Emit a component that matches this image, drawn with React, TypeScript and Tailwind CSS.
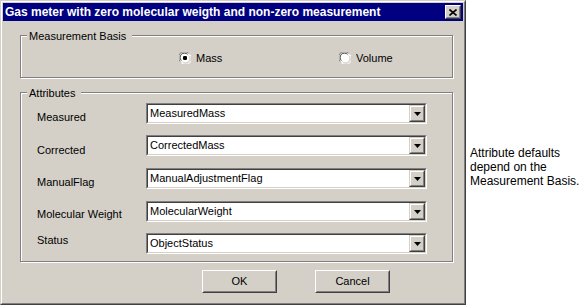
import React from "react";

const rows = [
  { label: "Measured", value: "MeasuredMass", pad: "pt-[8px]" },
  { label: "Corrected", value: "CorrectedMass", pad: "pt-[9px]" },
  { label: "ManualFlag", value: "ManualAdjustmentFlag", pad: "pt-[8px]" },
  { label: "Molecular Weight", value: "MolecularWeight", pad: "pt-[7px]" },
  { label: "Status", value: "ObjectStatus", pad: "pt-[1px]" },
];

function Radio({ checked }: { checked: boolean }) {
  return (
    <svg width="12" height="12" viewBox="0 0 12 12" className="shrink-0">
      <circle cx="6" cy="6" r="5.5" fill="#ffffff" />
      <path d="M1.2 9.5 A5.5 5.5 0 0 1 9.5 1.2" stroke="#808080" strokeWidth="1" fill="none" />
      <path d="M2.4 8.6 A4.3 4.3 0 0 1 8.6 2.4" stroke="#404040" strokeWidth="1" fill="none" />
      <path d="M10.8 2.5 A5.5 5.5 0 0 1 2.5 10.8" stroke="#ffffff" strokeWidth="1" fill="none" />
      <path d="M9.6 3.4 A4.3 4.3 0 0 1 3.4 9.6" stroke="#d4d0c8" strokeWidth="1" fill="none" />
      {checked && <rect x="4" y="4" width="4" height="4" rx="1.2" fill="#000000" />}
    </svg>
  );
}

function Group({ title, children, className }: { title: string; children: React.ReactNode; className: string }) {
  return (
    <div className={`relative ml-[17px] w-[433px] border border-[#808080] shadow-[inset_1px_1px_0_#ffffff,1px_1px_0_#ffffff] ${className}`}>
      <span className="absolute -top-[6px] left-[6px] bg-[#d4d0c8] pl-[2px] pr-[6px] text-[11px] leading-[13px] text-black">
        {title}
      </span>
      {children}
    </div>
  );
}

function Combo({ value }: { value: string }) {
  return (
    <div className="w-[281px] h-[21px] border border-t-[#808080] border-l-[#808080] border-r-white border-b-white">
      <div className="h-full flex border border-t-[#404040] border-l-[#404040] border-r-[#d4d0c8] border-b-[#d4d0c8] bg-white">
        <div className="flex-1 pl-[2px] pt-[1px] text-[11px] leading-[15px] text-black">{value}</div>
        <div className="w-[16px] h-[17px] border border-t-[#d4d0c8] border-l-[#d4d0c8] border-r-[#404040] border-b-[#404040] bg-[#d4d0c8]">
          <div className="h-full flex items-center justify-center border border-t-white border-l-white border-r-[#808080] border-b-[#808080]">
            <svg width="7" height="4" viewBox="0 0 7 4">
              <path d="M0 0 H7 L3.5 4 Z" fill="#000000" />
            </svg>
          </div>
        </div>
      </div>
    </div>
  );
}

function Button({ text }: { text: string }) {
  return (
    <div className="w-[75px] h-[23px] border border-t-white border-l-white border-r-[#404040] border-b-[#404040]">
      <div className="h-full flex items-center justify-center border border-t-[#d4d0c8] border-l-[#d4d0c8] border-r-[#808080] border-b-[#808080] text-[11px] text-black">
        {text}
      </div>
    </div>
  );
}

export default function App() {
  return (
    <div className="flex w-[580px] h-[306px] bg-white font-['Liberation_Sans',Arial,sans-serif]">
      <div className="w-[466px] h-[305px] shrink-0 border border-t-[#d4d0c8] border-l-[#d4d0c8] border-r-[#404040] border-b-[#404040] bg-[#d4d0c8]">
        <div className="h-full p-[1px] border border-t-white border-l-white border-r-[#808080] border-b-[#808080]">
          <div className="h-[18px] flex items-center justify-between bg-[#000080] pl-[2px] pr-[2px]">
            <span className="text-[12px] font-bold leading-[18px] text-white">
              Gas meter with zero molecular weigth and non-zero measurement
            </span>
            <div className="w-[16px] h-[14px] border border-t-white border-l-white border-r-[#404040] border-b-[#404040] bg-[#d4d0c8]">
              <div className="h-full flex items-center justify-center border border-t-[#d4d0c8] border-l-[#d4d0c8] border-r-[#808080] border-b-[#808080]">
                <svg width="8" height="7" viewBox="0 0 8 7">
                  <path d="M0.5 0.5 L7.5 6.5 M7.5 0.5 L0.5 6.5" stroke="#000000" strokeWidth="1.6" />
                </svg>
              </div>
            </div>
          </div>

          <Group title="Measurement Basis" className="mt-[14px] h-[43px]">
            <div className="grid grid-cols-[160px_160px] pl-[158px] pt-[16px]">
              <label className="flex items-center gap-[5px] text-[11px] leading-[12px] text-black">
                <Radio checked />
                Mass
              </label>
              <label className="flex items-center gap-[5px] text-[11px] leading-[12px] text-black">
                <Radio checked={false} />
                Volume
              </label>
            </div>
          </Group>

          <Group title="Attributes" className="mt-[14px] h-[170px]">
            <div className="flex flex-col pt-[10px]">
              {rows.map((r, i) => (
                <div key={r.label} className={`flex items-start ${i === 0 ? "" : i === 3 ? "mt-[12px]" : "mt-[11px]"}`}>
                  <div className={`w-[125px] pl-[16px] text-[11px] leading-[13px] text-black ${r.pad}`}>{r.label}</div>
                  <Combo value={r.value} />
                </div>
              ))}
            </div>
          </Group>

          <div className="flex gap-[38px] pl-[199px] mt-[8px]">
            <Button text="OK" />
            <Button text="Cancel" />
          </div>
        </div>
      </div>
      <div className="pl-[4px] pt-[146px] text-[12px] leading-[14px] text-black">
        Attribute defaults
        <br />
        depend on the
        <br />
        Measurement Basis.
      </div>
    </div>
  );
}
